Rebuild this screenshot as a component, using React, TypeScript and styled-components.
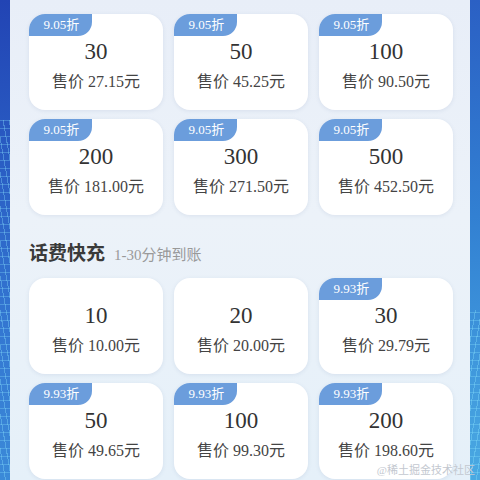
import React from "react";
import styled, { createGlobalStyle } from "styled-components";

const Global = createGlobalStyle`
  html, body { margin: 0; padding: 0; width: 480px; height: 480px; overflow: hidden; }
  body { font-family: "Liberation Serif", "Noto Sans CJK SC", serif; }
`;

const Page = styled.div`
  position: relative;
  display: flex;
  width: 480px;
  height: 480px;
  overflow: hidden;
`;

const Strip = styled.div<{ $side: "left" | "right" }>`
  width: 10px;
  flex: none;
  background:
    repeating-linear-gradient(
        ${(p) => (p.$side === "left" ? "80deg" : "100deg")},
        transparent 0 5px,
        rgba(140, 230, 255, 0.35) 5px 6px
      )
      0 ${(p) => (p.$side === "left" ? "120px" : "310px")} /
      100% ${(p) => (p.$side === "left" ? "360px" : "170px")} no-repeat,
    repeating-linear-gradient(
        0deg,
        transparent 0 7px,
        rgba(140, 230, 255, 0.3) 7px 8px
      )
      0 ${(p) => (p.$side === "left" ? "120px" : "310px")} /
      100% ${(p) => (p.$side === "left" ? "360px" : "170px")} no-repeat,
    ${(p) =>
      p.$side === "left"
        ? "linear-gradient(180deg, #2244b4 0%, #2a5ec4 35%, #3478d2 70%, #3b8ad8 100%)"
        : "linear-gradient(180deg, #2b60c4 0%, #3280d2 45%, #3f97dc 75%, #4aa9e2 100%)"};
`;

const Panel = styled.div`
  flex: 1;
  padding: 14px 17px 0 19px;
  background: linear-gradient(180deg, #e8eef8 0%, #ecf2f9 45%, #e5f0f9 100%);
`;

const Grid = styled.div`
  display: grid;
  grid-template-columns: repeat(3, 134px);
  column-gap: 11px;
  row-gap: 9px;
`;

const Card = styled.div`
  position: relative;
  height: 96px;
  box-sizing: border-box;
  padding-top: 24px;
  background: #ffffff;
  border-radius: 16px;
  box-shadow: 0 1px 4px rgba(60, 90, 140, 0.1);
  display: flex;
  flex-direction: column;
  align-items: center;
`;

const Badge = styled.div`
  position: absolute;
  top: 0;
  left: 0;
  width: 63px;
  height: 22px;
  background: #6b9ddc;
  color: #ffffff;
  border-radius: 16px 0 14px 0;
  font-size: 13px;
  line-height: 22px;
  text-align: center;
  box-sizing: border-box;
  padding-left: 2px;
`;

const Amount = styled.div`
  font-size: 23px;
  line-height: 28px;
  color: #333333;
`;

const Price = styled.div`
  margin-top: 5px;
  font-size: 16px;
  line-height: 22px;
  color: #444444;
`;

const Heading = styled.div`
  display: flex;
  align-items: baseline;
  gap: 9px;
  height: 24px;
  padding: 23px 0 16px;
`;

const HeadTitle = styled.span`
  font-family: "Noto Sans CJK SC", sans-serif;
  font-weight: 700;
  font-size: 19px;
  color: #3a3a3a;
`;

const HeadSub = styled.span`
  font-size: 15px;
  color: #999999;
`;

const Watermark = styled.div`
  position: absolute;
  right: 5px;
  bottom: 3px;
  font-size: 11px;
  color: #c3c8d0;
  font-family: "Liberation Serif", "Noto Sans CJK SC", serif;
`;

type Item = { amount: string; price: string; discount?: string };

const fast: Item[] = [
  { amount: "30", price: "27.15", discount: "9.05折" },
  { amount: "50", price: "45.25", discount: "9.05折" },
  { amount: "100", price: "90.50", discount: "9.05折" },
  { amount: "200", price: "181.00", discount: "9.05折" },
  { amount: "300", price: "271.50", discount: "9.05折" },
  { amount: "500", price: "452.50", discount: "9.05折" },
];

const quick: Item[] = [
  { amount: "10", price: "10.00" },
  { amount: "20", price: "20.00" },
  { amount: "30", price: "29.79", discount: "9.93折" },
  { amount: "50", price: "49.65", discount: "9.93折" },
  { amount: "100", price: "99.30", discount: "9.93折" },
  { amount: "200", price: "198.60", discount: "9.93折" },
];

const Cards = ({ items }: { items: Item[] }) => (
  <Grid>
    {items.map((it, i) => (
      <Card key={i}>
        {it.discount && <Badge>{it.discount}</Badge>}
        <Amount>{it.amount}</Amount>
        <Price>售价 {it.price}元</Price>
      </Card>
    ))}
  </Grid>
);

export default function App() {
  return (
    <Page>
      <Global />
      <Strip $side="left" />
      <Panel>
        <Cards items={fast} />
        <Heading>
          <HeadTitle>话费快充</HeadTitle>
          <HeadSub>1-30分钟到账</HeadSub>
        </Heading>
        <Cards items={quick} />
      </Panel>
      <Strip $side="right" />
      <Watermark>@稀土掘金技术社区</Watermark>
    </Page>
  );
}
